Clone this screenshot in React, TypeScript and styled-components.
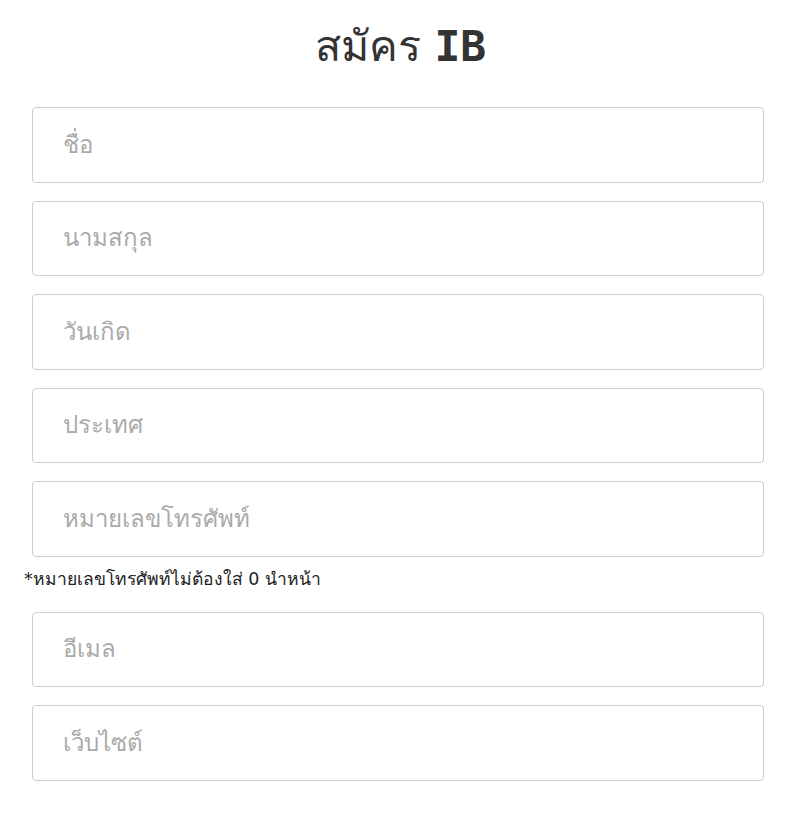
import React from 'react';
import styled, { createGlobalStyle } from 'styled-components';

const GlobalStyle = createGlobalStyle`
  body {
    margin: 8px;
    background: #fff;
    font-family: Tahoma, "DejaVu Sans", "Noto Sans", sans-serif;
  }
`;

const Page = styled.div`
  width: 785px;
`;

const Title = styled.h1`
  margin: 14px 0 37px;
  text-align: center;
  font-size: 43px;
  font-weight: normal;
  color: #333;
  line-height: 48px;
`;

const Code = styled.b`
  font-family: "DejaVu Sans Mono", monospace;
  font-weight: bold;
`;

const Form = styled.form`
  display: flex;
  flex-direction: column;
  padding: 0 16px 0 24px;
`;

const Input = styled.input<{ $tight?: boolean }>`
  box-sizing: border-box;
  width: 732px;
  height: 75.5px;
  margin-bottom: ${(p) => (p.$tight ? '0' : '18px')};
  padding: 0 30px;
  border: 1px solid #ccc;
  border-radius: 4px;
  font-family: inherit;
  font-size: 24px;
  color: #333;
  &::placeholder {
    color: #aaa;
  }
`;

const Note = styled.p`
  margin: 8px 0 19px -8px;
  font-size: 17.5px;
  font-weight: normal;
  color: #222;
`;

const fields = ['ชื่อ', 'นามสกุล', 'วันเกิด', 'ประเทศ'];

const App: React.FC = () => {
  return (
    <>
      <GlobalStyle />
      <Page>
        <Title>
          สมัคร <Code>IB</Code>
        </Title>
        <Form>
          {fields.map((f) => (
            <Input key={f} type='text' placeholder={f} />
          ))}
          <Input type='text' placeholder='หมายเลขโทรศัพท์' $tight />
          <Note>*หมายเลขโทรศัพท์ไม่ต้องใส่ 0 นำหน้า</Note>
          <Input type='text' placeholder='อีเมล' />
          <Input type='text' placeholder='เว็บไซต์' />
        </Form>
      </Page>
    </>
  );
};

export default App;
